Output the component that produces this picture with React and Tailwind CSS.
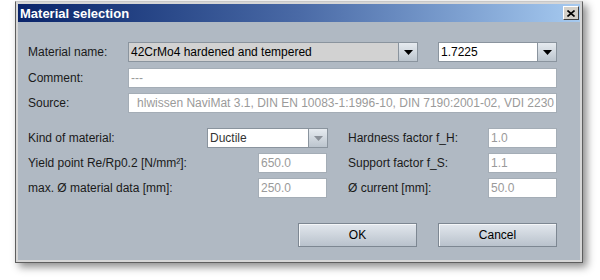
import React from 'react';

// Swing-style "Material selection" dialog
const font = { fontFamily: '"Liberation Sans", Arial, sans-serif' };

function Arrow({ muted }) {
  return (
    <div className="w-[19px] h-full flex items-center justify-center border-l border-[#8a949e] bg-gradient-to-b from-[#e6ebf0] to-[#bcc5ce]">
      <svg width="9" height="5" viewBox="0 0 9 5">
        <path d="M0 0 L9 0 L4.5 5 Z" fill={muted ? '#8a9098' : '#000'} />
      </svg>
    </div>
  );
}

function Combo({ value, className, bg = 'bg-white', text = 'text-black', muted }) {
  return (
    <div className={`h-[20px] flex border border-[#8a949e] ${className}`}>
      <div className={`flex-1 flex items-center pl-[2px] text-[12px] ${bg} ${text}`}>{value}</div>
      <Arrow muted={muted} />
    </div>
  );
}

function Field({ value, className }) {
  return (
    <div className={`h-[20px] flex items-center pl-[2px] bg-white border border-[#a4adb6] text-[12px] text-[#9a9a9a] whitespace-nowrap overflow-hidden ${className}`}>
      {value}
    </div>
  );
}

function Button({ children }) {
  return (
    <div className="w-[119px] h-[24px] flex items-center justify-center border border-[#7d8792] bg-gradient-to-b from-[#e2e7ed] to-[#b9c2cc] shadow-[inset_1px_1px_0_#f4f6f8] text-[12px] text-black">
      {children}
    </div>
  );
}

export default function App() {
  return (
    <div className="w-[600px] h-[280px] bg-white pt-[1px] pl-[15px]" style={font}>
      <div className="w-[568px] h-[262px] flex flex-col border border-[#5e5e5e] border-t-[#c8c8c8] bg-[#d6d6d6] p-[2px] shadow-[4px_4px_8px_rgba(0,0,0,0.45)]">
        {/* Title bar */}
        <div className="h-[18px] flex items-center justify-between pl-[2px] pr-[1px] bg-gradient-to-r from-[#0a246a] via-[#4a6aa6] to-[#a6caf0]">
          <span className="text-white font-bold text-[13px] leading-none">Material selection</span>
          <div className="w-[16px] h-[14px] flex items-center justify-center bg-[#d4d0c8] border border-t-white border-l-white border-r-[#404040] border-b-[#404040]">
            <svg width="8" height="7" viewBox="0 0 8 7">
              <path d="M0.5 0.5 L7.5 6.5 M7.5 0.5 L0.5 6.5" stroke="#000" strokeWidth="1.6" />
            </svg>
          </div>
        </div>

        {/* Body */}
        <div className="flex-1 bg-[#b0b9c3] pl-[10px] pr-[23px] pt-[20px] text-[12px] text-[#1a1a1a]">
          <div className="flex items-center">
            <span className="w-[100px]">Material name:</span>
            <Combo value="42CrMo4 hardened and tempered" className="w-[290px]" bg="bg-[#d2d2d2]" />
            <Combo value="1.7225" className="w-[119px] ml-[20px]" />
          </div>

          <div className="flex items-center mt-[6px]">
            <span className="w-[100px]">Comment:</span>
            <Field value="---" className="w-[429px]" />
          </div>
          <div className="flex items-center mt-[5px]">
            <span className="w-[100px]">Source:</span>
            <Field
              value="hlwissen NaviMat 3.1, DIN EN 10083-1:1996-10, DIN 7190:2001-02, VDI 2230"
              className="w-[429px] justify-end pr-[2px]"
            />
          </div>

          <div className="flex items-center mt-[15px]">
            <div className="w-[300px] flex items-center justify-between">
              <span>Kind of material:</span>
              <Combo value="Ductile" className="w-[121px]" text="text-[#333]" muted />
            </div>
            <span className="w-[140px] ml-[20px]">Hardness factor f_H:</span>
            <Field value="1.0" className="w-[69px]" />
          </div>
          <div className="flex items-center mt-[5px]">
            <div className="w-[299px] flex items-center justify-between">
              <span>Yield point Re/Rp0.2 [N/mm²]:</span>
              <Field value="650.0" className="w-[69px]" />
            </div>
            <span className="w-[140px] ml-[21px]">Support factor f_S:</span>
            <Field value="1.1" className="w-[69px]" />
          </div>
          <div className="flex items-center mt-[5px]">
            <div className="w-[299px] flex items-center justify-between">
              <span>max. Ø material data [mm]:</span>
              <Field value="250.0" className="w-[69px]" />
            </div>
            <span className="w-[140px] ml-[21px]">Ø current [mm]:</span>
            <Field value="50.0" className="w-[69px]" />
          </div>

          <div className="flex justify-end gap-[21px] mt-[25px]">
            <Button>OK</Button>
            <Button>Cancel</Button>
          </div>
        </div>
      </div>
    </div>
  );
}
